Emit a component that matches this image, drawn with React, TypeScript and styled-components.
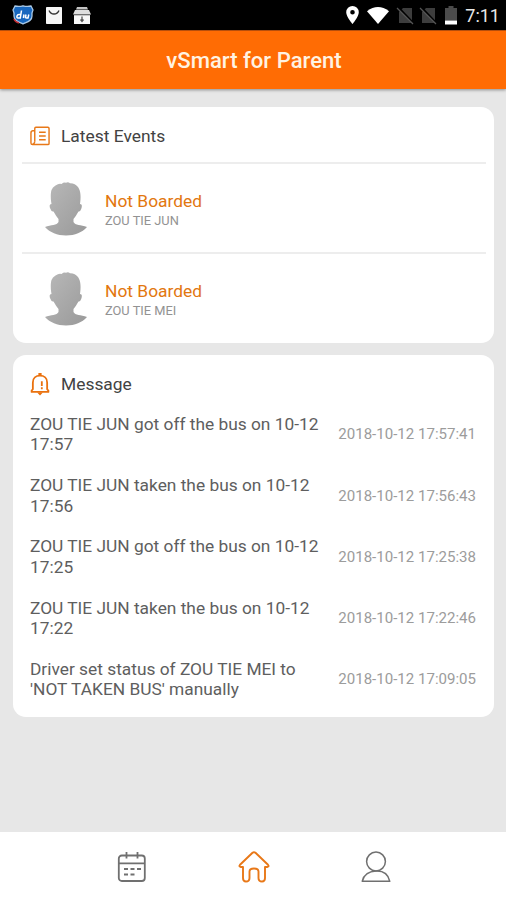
import React from "react";
import styled, { createGlobalStyle } from "styled-components";

const ORANGE = "#ff6c04";
const ACCENT = "#e87818";

const GlobalStyle = createGlobalStyle`
  *, *::before, *::after { box-sizing: border-box; }
  body { margin: 0; background: #e7e7e7; }
`;

const Screen = styled.div`
  display: flex;
  flex-direction: column;
  width: 100%;
  height: 900px;
  overflow: hidden;
  background: #e7e7e7;
  font-family: Roboto, "Liberation Sans", sans-serif;
`;

const StatusBar = styled.div`
  display: flex;
  align-items: center;
  justify-content: space-between;
  flex: none;
  height: 30px;
  padding: 0 6px 0 12px;
  background: #000;
`;

const StatusGroup = styled.div`
  display: flex;
  align-items: center;
  height: 30px;
`;

const Clock = styled.span`
  color: #e8e8e8;
  font-size: 18px;
  line-height: 30px;
  margin: 2px 0 0 0;
`;

const Header = styled.header`
  display: flex;
  align-items: center;
  justify-content: center;
  flex: none;
  height: 59px;
  padding: 0 0 0 2px;
  background: ${ORANGE};
  border-top: 1px solid #b64e0c;
  box-shadow: 0 1px 3px rgba(0, 0, 0, 0.4);
`;

const Title = styled.h1`
  margin: 0;
  color: #fff3e2;
  font-size: 22.1px;
  font-weight: 500;
  line-height: 28px;
`;

const Content = styled.main`
  display: flex;
  flex-direction: column;
  flex: 1;
  gap: 12px;
  padding: 18px 12px 0 13px;
`;

const Card = styled.section<{ $height: number }>`
  flex: none;
  height: ${(p) => p.$height}px;
  background: #fff;
  border-radius: 13px;
  overflow: hidden;
`;

const CardHeader = styled.div<{ $height: number; $offset: number }>`
  display: flex;
  align-items: center;
  gap: 11px;
  height: ${(p) => p.$height}px;
  padding: ${(p) => p.$offset}px 0 0 17px;
`;

const CardTitle = styled.h2`
  margin: 0;
  color: #424242;
  font-size: 17.4px;
  font-weight: 400;
  line-height: 22px;
`;

const EventRow = styled.div`
  display: flex;
  align-items: center;
  gap: 17px;
  height: 90px;
  margin: 0 8px 0 9px;
  padding: 2px 0 0 22px;
  border-top: 2px solid #ededed;
`;

const EventText = styled.div`
  display: flex;
  flex-direction: column;
  padding-top: 2px;
`;

const EventStatus = styled.span`
  color: #e2770f;
  font-size: 17.4px;
  line-height: 22px;
`;

const EventName = styled.span`
  color: #929292;
  font-size: 12.85px;
  line-height: 18px;
`;

const MessageRow = styled.div`
  display: flex;
  align-items: center;
  justify-content: space-between;
  height: 61.25px;
  padding: 0 18px 0 17px;
`;

const MessageText = styled.p`
  width: 295px;
  margin: 0;
  color: #5e5e5e;
  font-size: 17.33px;
  line-height: 20.4px;
`;

const MessageDate = styled.time`
  color: #9c9c9c;
  font-size: 15.05px;
  line-height: 20px;
  white-space: nowrap;
`;

const TabBar = styled.nav`
  display: flex;
  align-items: center;
  justify-content: center;
  gap: 91px;
  flex: none;
  height: 68px;
  padding: 1px 0 0 1px;
  background: #fff;
`;

const Tab = styled.button<{ $active?: boolean }>`
  display: flex;
  padding: 0;
  border: 0;
  background: none;
  color: ${(p) => (p.$active ? ACCENT : "#707070")};
`;

const Icon = styled.svg`
  display: block;
  flex: none;
  overflow: visible;
`;

const ShieldIcon = () => (
  <Icon width="22" height="20" viewBox="0 0 22 20">
    <path d="M3 1Q7 2 11 .8Q15 2 19 1L21 5Q19.500 8 20 11C20 16 15 17 11 19C7 17 2 16 2 11Q2.500 8 1 5Z" fill="#1767bf" stroke="#a9c8e5" strokeWidth="1.300" />
    <path d="M2 14Q3 17 7 18" stroke="#c62f35" strokeWidth="1.500" fill="none" />
    <path d="M9.500 5.500L8.300 13H6Q4.500 13 5 11Q5.400 9.500 7 9.500H8.800M12 9.500L11.400 13M14 9.500L13.500 12Q13.400 13 14.500 13H16L16.800 9.500" stroke="#fff" strokeWidth="1.500" fill="none" />
  </Icon>
);

const MailIcon = () => (
  <Icon width="16" height="17" viewBox="0 0 16 17">
    <rect width="16" height="17" rx=".8" fill="#f6f6f6" />
    <path d="M3 3.500Q4.500 7 8 7T13 3.500" stroke="#333" strokeWidth="1.300" fill="none" />
  </Icon>
);

const ToolboxIcon = () => (
  <Icon width="18" height="17" viewBox="0 0 18 17">
    <path d="M4 0H14L15 2.500H3Z" fill="#c4c4c4" />
    <path d="M2 3H16L18 7.500H0Z" fill="#dedede" />
    <path d="M1 8.200H17V17H1Z" fill="#f7f7f7" />
    <path d="M9 9.500V14.500M7.500 12.500L9 14.500L10.500 12.500" stroke="#555" strokeWidth="1.300" fill="none" />
  </Icon>
);

const PinIcon = () => (
  <Icon width="13" height="18" viewBox="0 0 13 18">
    <path fillRule="evenodd" d="M6.500 0A6.300 6.300 0 0 0 .2 6.300C.2 11 6.500 18 6.500 18S12.800 11 12.800 6.300A6.300 6.300 0 0 0 6.500 0ZM6.500 4A2.300 2.300 0 1 1 6.500 8.600A2.300 2.300 0 0 1 6.500 4Z" fill="#fff" />
  </Icon>
);

const WifiIcon = () => (
  <Icon width="22" height="17" viewBox="0 0 22 17">
    <path d="M0 4.200Q11-4 22 4.200L11 17Z" fill="#fff" />
  </Icon>
);

const NoSimIcon = () => (
  <Icon width="17" height="17" viewBox="0 0 17 17">
    <path d="M6 1H15V16H2V5Z" fill="#3d3d3d" />
    <path d="M1 0L17 17" stroke="#000" strokeWidth="2.200" />
    <path d="M0 1L16 17" stroke="#555" strokeWidth="1.300" />
  </Icon>
);

const BatteryIcon = () => (
  <Icon width="12" height="19" viewBox="0 0 12 19">
    <path d="M0 2H3.500V0H8.500V2H12V14.500H0Z" fill="#4b4b4b" />
    <path d="M0 14.500H12V18.500H0Z" fill="#fff" />
  </Icon>
);

const StatusIcons = styled(StatusGroup)`
  gap: 11.5px;
`;

const SignalIcons = styled(StatusGroup)`
  gap: 8px;
`;

const SimIcons = styled(StatusGroup)`
  gap: 6px;
  margin-top: 1px;
`;

const NewsIcon = () => (
  <Icon width="20" height="20" viewBox="0 0 21 20" fill="none" stroke={ACCENT} strokeWidth="1.500">
    <path d="M5 15.500V2Q5 .8 6.200 .8H18.800Q20 .8 20 2V17.800Q20 19 18.800 19H2.800Q1 19 1 17.300V6.500Q1 4.300 4.800 4.300" />
    <path d="M5 15.500Q4.800 18.500 2.500 18.800M9.500 6H16.500M9.500 10H16.500M9.500 14H16.500" />
  </Icon>
);

const BellIcon = () => (
  <Icon width="20" height="24" viewBox="0 0 21 24" fill="none" stroke="#ea710e" strokeWidth="1.900">
    <path d="M1.700 20.300V19L3 17.500V10.300C3 6 6.200 3.200 10.500 3.200S18 6 18 10.300V17.500L19.300 19V20.300Z" strokeLinejoin="round" />
    <path d="M8.800 1.500H12.200M10.500 .6V3" />
    <path d="M7.500 21H13.500L10.500 24Z" fill="#ea710e" stroke="none" />
    <path d="M12.400 9V14M12.400 15.500V17.400" strokeWidth="1.900" />
  </Icon>
);

const Avatar = ({ id }: { id: string }) => (
  <Icon width="44" height="54" viewBox="0 0 44 54">
    <defs>
      <linearGradient id={id} x1="0" y1="0" x2="1" y2="1">
        <stop offset="0" stopColor="#b9b9b9" />
        <stop offset="1" stopColor="#999" />
      </linearGradient>
    </defs>
    <path
      fill={`url(#${id})`}
      d="M7.500 22C6.500 17 6.500 11 7.500 8Q8.500 5 11.500 3.500Q15 1 17.500 2Q20 0 22 .8Q24-.5 26 1.200Q31 1 34 5C37 9 37 16 36 22C38.500 22 38 25 37.200 27Q36 30 34.500 29.500Q32 34 29.500 37V40C31 43.500 37 42.500 43 45C38 50.500 31 53.500 22 53.500S6 50.500 1 45C7 42.500 13 43.500 14.500 40V37Q12 34 9.500 29.500Q7.500 30 6.500 27C5.500 25 5 22 7.500 22Z"
    />
  </Icon>
);

const CalendarIcon = () => (
  <Icon width="30" height="32" viewBox="0 0 30 32" fill="none" stroke="currentColor" strokeWidth="1.800">
    <rect x="1.800" y="4.500" width="26" height="25.500" rx="3" />
    <path d="M2 12.300H28M9.500 1V7.500M20.500 1V7.500" />
    <path d="M7 18H11M13.500 18H17.500M20 18H24M7 23.500H11M13.500 23.500H17.500" />
  </Icon>
);

const HomeIcon = () => (
  <Icon width="32" height="32" viewBox="0 0 32 32" fill="none" stroke="currentColor" strokeWidth="1.900" strokeLinejoin="round">
    <path d="M5 16H2.800Q.5 15.500 2 13.800L14.500 1.800Q16 .7 17.500 1.800L30 13.800Q31.500 15.500 29.200 16H27V27Q27 30.500 24 30.500Q20.500 30.500 20.500 27V20.500Q20.500 17.500 16 17.500T11.500 20.500V27Q11.500 30.500 8 30.500Q5 30.500 5 27Z" />
  </Icon>
);

const UserIcon = () => (
  <Icon width="30" height="32" viewBox="0 0 30 32" fill="none" stroke="currentColor" strokeWidth="1.500">
    <circle cx="15" cy="10.500" r="9.400" />
    <path d="M1.200 30.300Q3.500 20.500 15 20T28.800 30.300Z" strokeLinejoin="round" />
  </Icon>
);

const events = [
  { status: "Not Boarded", name: "ZOU TIE JUN" },
  { status: "Not Boarded", name: "ZOU TIE MEI" },
];

const messages = [
  { text: "ZOU TIE JUN got off the bus on 10-12 17:57", date: "2018-10-12 17:57:41" },
  { text: "ZOU TIE JUN taken the bus on 10-12 17:56", date: "2018-10-12 17:56:43" },
  { text: "ZOU TIE JUN got off the bus on 10-12 17:25", date: "2018-10-12 17:25:38" },
  { text: "ZOU TIE JUN taken the bus on 10-12 17:22", date: "2018-10-12 17:22:46" },
  { text: "Driver set status of ZOU TIE MEI to 'NOT TAKEN BUS' manually", date: "2018-10-12 17:09:05" },
];

export default function App() {
  return (
    <Screen>
      <GlobalStyle />
      <StatusBar>
        <StatusIcons>
          <ShieldIcon />
          <MailIcon />
          <ToolboxIcon />
        </StatusIcons>
        <SignalIcons>
          <PinIcon />
          <WifiIcon />
          <SimIcons>
            <NoSimIcon />
            <NoSimIcon />
          </SimIcons>
          <BatteryIcon />
          <Clock>7:11</Clock>
        </SignalIcons>
      </StatusBar>
      <Header>
        <Title>vSmart for Parent</Title>
      </Header>
      <Content>
        <Card $height={236}>
          <CardHeader $height={55} $offset={2}>
            <NewsIcon />
            <CardTitle>Latest Events</CardTitle>
          </CardHeader>
          {events.map((e) => (
            <EventRow key={e.name}>
              <Avatar id={`shade-${e.name.replace(/ /g, "-")}`} />
              <EventText>
                <EventStatus>{e.status}</EventStatus>
                <EventName>{e.name}</EventName>
              </EventText>
            </EventRow>
          ))}
        </Card>
        <Card $height={362}>
          <CardHeader $height={48.7} $offset={8.7}>
            <BellIcon />
            <CardTitle>Message</CardTitle>
          </CardHeader>
          {messages.map((m) => (
            <MessageRow key={m.date}>
              <MessageText>{m.text}</MessageText>
              <MessageDate>{m.date}</MessageDate>
            </MessageRow>
          ))}
        </Card>
      </Content>
      <TabBar>
        <Tab aria-label="Calendar"><CalendarIcon /></Tab>
        <Tab aria-label="Home" $active><HomeIcon /></Tab>
        <Tab aria-label="Profile"><UserIcon /></Tab>
      </TabBar>
    </Screen>
  );
}
